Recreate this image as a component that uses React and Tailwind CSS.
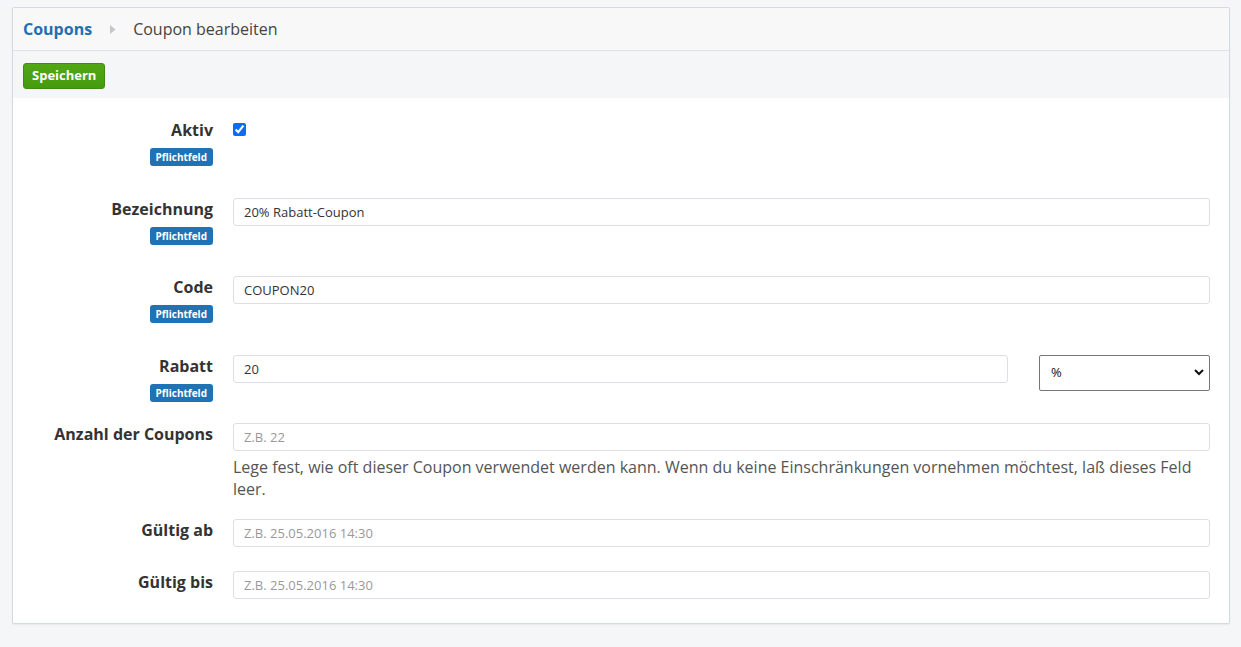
import React, { useState } from 'react';

const Badge = () => (
  <span className="mt-[7px] inline-block rounded-[3px] bg-[#1f72b3] px-[6px] text-[10px] leading-[18px] font-bold text-white">
    Pflichtfeld
  </span>
);

const Label = ({ children, required }) => (
  <div className="flex w-[200px] shrink-0 flex-col items-end">
    <div className="text-[16px] leading-[22px] font-bold text-[#333]">{children}</div>
    {required && <Badge />}
  </div>
);

const TextInput = ({ value, placeholder, onChange }) => (
  <input
    type="text"
    value={value}
    placeholder={placeholder}
    onChange={onChange}
    className="h-[28px] w-full rounded-[3px] border border-[#dcdfe3] bg-white px-[10px] text-[13px] text-[#333] placeholder:text-[#999] focus:outline-none"
  />
);

const App = () => {
  const [form, setForm] = useState({
    aktiv: true,
    name: '20% Rabatt-Coupon',
    code: 'COUPON20',
    rabatt: '20',
    typ: '%',
    anzahl: '',
    von: '',
    bis: '',
  });

  const set = (key) => (e) => setForm({ ...form, [key]: e.target.value });

  return (
    <div className="min-h-[647px] bg-[#f5f6f8] pt-[7px] pl-[12px] pr-[11px] font-['Open_Sans',sans-serif]">
      <div className="rounded-[2px] border border-[#d5dae0] bg-white shadow-[0_1px_2px_rgba(0,0,0,0.06)]">
        {/* Breadcrumb */}
        <div className="flex h-[43px] items-center border-b border-[#dfe3e8] bg-[#f8f8f8] pl-[10px]">
          <a className="text-[16px] font-bold text-[#1f6fb2]">Coupons</a>
          <svg className="mr-[17px] ml-[18px]" width="6" height="9" viewBox="0 0 6 9">
            <path d="M0 0 L5.5 4.5 L0 9 Z" fill="#c3c6ca" />
          </svg>
          <span className="text-[16px] text-[#444]">Coupon bearbeiten</span>
        </div>

        {/* Toolbar */}
        <div className="h-[47px] bg-[#f5f6f8] pt-[11px] pl-[10px]">
          <button className="h-[26px] rounded-[3px] border border-[#3f8c0d] bg-gradient-to-b from-[#51a814] to-[#469a10] px-[8px] text-[13px] font-bold text-white">
            Speichern
          </button>
        </div>

        {/* Form */}
        <div className="pt-[21px] pr-[19px] pb-[24px]">
          <div className="flex gap-[20px]">
            <Label required>Aktiv</Label>
            <div className="pt-[4px]">
              <input
                type="checkbox"
                checked={form.aktiv}
                onChange={(e) => setForm({ ...form, aktiv: e.target.checked })}
                className="m-0 block h-[13px] w-[13px] accent-[#0b6cf5]"
              />
            </div>
          </div>

          <div className="mt-[32px] flex gap-[20px]">
            <Label required>Bezeichnung</Label>
            <div className="flex-1">
              <TextInput value={form.name} onChange={set('name')} />
            </div>
          </div>

          <div className="mt-[31px] flex gap-[20px]">
            <Label required>Code</Label>
            <div className="flex-1">
              <TextInput value={form.code} onChange={set('code')} />
            </div>
          </div>

          <div className="mt-[32px] flex gap-[20px]">
            <Label required>Rabatt</Label>
            <div className="flex flex-1 items-start gap-[31px]">
              <div className="flex-1">
                <TextInput value={form.rabatt} onChange={set('rabatt')} />
              </div>
              <div className="relative w-[171px]">
                <select
                  value={form.typ}
                  onChange={set('typ')}
                  className="h-[36px] w-full appearance-none rounded-[2px] border border-[#767676] bg-white pl-[11px] text-[13px] text-[#111] focus:outline-none"
                >
                  <option value="%">%</option>
                  <option value="EUR">EUR</option>
                </select>
                <svg className="pointer-events-none absolute top-[14px] right-[6px]" width="10" height="7" viewBox="0 0 10 7">
                  <path d="M1 1 L5 5 L9 1" fill="none" stroke="#111" strokeWidth="2" />
                </svg>
              </div>
            </div>
          </div>

          <div className="mt-[21px] flex gap-[20px]">
            <Label>Anzahl der Coupons</Label>
            <div className="flex-1">
              <TextInput value={form.anzahl} placeholder="Z.B. 22" onChange={set('anzahl')} />
              <p className="mt-[5px] text-[16px] leading-[22px] text-[#555]">
                Lege fest, wie oft dieser Coupon verwendet werden kann. Wenn du keine Einschränkungen vornehmen möchtest, laß dieses Feld leer.
              </p>
            </div>
          </div>

          <div className="mt-[19px] flex gap-[20px]">
            <Label>Gültig ab</Label>
            <div className="flex-1">
              <TextInput value={form.von} placeholder="Z.B. 25.05.2016 14:30" onChange={set('von')} />
            </div>
          </div>

          <div className="mt-[24px] flex gap-[20px]">
            <Label>Gültig bis</Label>
            <div className="flex-1">
              <TextInput value={form.bis} placeholder="Z.B. 25.05.2016 14:30" onChange={set('bis')} />
            </div>
          </div>
        </div>
      </div>
    </div>
  );
};

export default App;
